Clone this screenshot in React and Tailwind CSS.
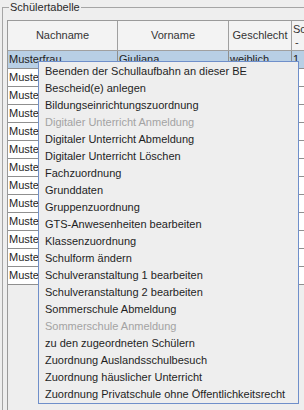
import React from "react";

const items = [
  { label: "Beenden der Schullaufbahn an dieser BE" },
  { label: "Bescheid(e) anlegen" },
  { label: "Bildungseinrichtungszuordnung" },
  { label: "Digitaler Unterricht Anmeldung", disabled: true },
  { label: "Digitaler Unterricht Abmeldung" },
  { label: "Digitaler Unterricht Löschen" },
  { label: "Fachzuordnung" },
  { label: "Grunddaten" },
  { label: "Gruppenzuordnung" },
  { label: "GTS-Anwesenheiten bearbeiten" },
  { label: "Klassenzuordnung" },
  { label: "Schulform ändern" },
  { label: "Schulveranstaltung 1 bearbeiten" },
  { label: "Schulveranstaltung 2 bearbeiten" },
  { label: "Sommerschule Abmeldung" },
  { label: "Sommerschule Anmeldung", disabled: true },
  { label: "zu den zugeordneten Schülern" },
  { label: "Zuordnung Auslandsschulbesuch" },
  { label: "Zuordnung häuslicher Unterricht" },
  { label: "Zuordnung Privatschule ohne Öffentlichkeitsrecht" },
];

const rows = [
  ["Musterfrau", "Giuliana", "weiblich", "1"],
  ["Mustermann", "Lukas", "männlich", "1"],
  ["Musterfrau", "Anna", "weiblich", "2"],
  ["Mustermann", "Jonas", "männlich", "2"],
  ["Musterfrau", "Lea", "weiblich", "1"],
  ["Mustermann", "Felix", "männlich", "3"],
  ["Musterfrau", "Sophie", "weiblich", "2"],
  ["Mustermann", "Paul", "männlich", "1"],
  ["Musterfrau", "Marie", "weiblich", "3"],
  ["Mustermann", "David", "männlich", "2"],
  ["Musterfrau", "Emma", "weiblich", "1"],
  ["Mustermann", "Elias", "männlich", "3"],
  ["Musterfrau", "Laura", "weiblich", "2"],
];

function App() {
  return (
    <div className="relative w-[304px] h-[410px] overflow-hidden bg-[#eeeeee] font-['Liberation_Sans',Arial,sans-serif] text-[11px] text-[#1e1e1e]">
      <fieldset className="ml-[2px] w-[330px] h-[440px] border border-[#a5a5a5]">
        <legend className="ml-[6px] px-[1px] leading-[14px] text-[#2a2a2a]">
          Schülertabelle
        </legend>
        <div className="pl-[4px] pt-[6px]">
          <div className="w-[320px] h-[420px] border border-[#9a9a9a] bg-[#eeeeee]">
            {/* Kopfzeile */}
            <div className="flex h-[30px] border-b border-[#a0a0a0] bg-[#f3f3f3] text-[#333]">
              <div className="w-[110px] flex items-center justify-center border-r border-[#a0a0a0]">
                Nachname
              </div>
              <div className="w-[111px] flex items-center justify-center border-r border-[#a0a0a0]">
                Vorname
              </div>
              <div className="w-[63px] flex items-center justify-center border-r border-[#a0a0a0]">
                Geschlecht
              </div>
              <div className="flex-1 flex flex-col justify-center pl-[1px] leading-[13px]">
                <span>Schul-</span>
                <span className="pl-[2px]">-</span>
              </div>
            </div>
            {rows.map((r, i) => (
              <div
                key={i}
                className={
                  i === 0
                    ? "flex h-[18px] border-b border-[#8f8f8f] bg-[#b8cfe5] leading-[17px]"
                    : "flex h-[18px] border-b border-[#8f8f8f] bg-white leading-[17px]"
                }
              >
                <div className="w-[110px] pl-[1px] border-r border-[#8f8f8f] overflow-hidden whitespace-nowrap">
                  {r[0]}
                </div>
                <div className="w-[111px] pl-[1px] border-r border-[#8f8f8f] overflow-hidden whitespace-nowrap">
                  {r[1]}
                </div>
                <div className="w-[63px] pl-[1px] border-r border-[#8f8f8f] overflow-hidden whitespace-nowrap">
                  {r[2]}
                </div>
                <div className="flex-1 pl-[1px]">{r[3]}</div>
              </div>
            ))}
          </div>
        </div>
      </fieldset>

      {/* Kontextmenü */}
      <div className="absolute left-[38px] top-[61px] w-[261px] h-[343px] border border-[#6f8fca] bg-[#eeeeee] pt-[1px]">
        {items.map((it) => (
          <div
            key={it.label}
            className={
              it.disabled
                ? "h-[17px] leading-[17px] pl-[6px] whitespace-nowrap text-[#a3a3a3]"
                : "h-[17px] leading-[17px] pl-[6px] whitespace-nowrap text-[#1e1e1e]"
            }
          >
            {it.label}
          </div>
        ))}
      </div>
    </div>
  );
}

export default App;
